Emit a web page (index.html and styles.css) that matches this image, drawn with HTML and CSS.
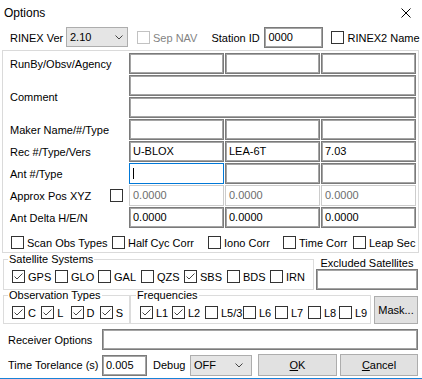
FILE: index.html
```html
<!DOCTYPE html>
<html lang="en">
<head>
  <meta charset="UTF-8">
  <meta name="viewport" content="width=device-width, initial-scale=1.0">
  <title>Options</title>
  <link rel="stylesheet" href="styles.css">
</head>
<body>
  <div class="dialog">
    <div class="titlebar">
      <span class="title">Options</span>
      <svg class="close" width="10" height="10" viewBox="0 0 10 10"><path d="M0.5 0.5 L9.5 9.5 M9.5 0.5 L0.5 9.5" stroke="#000" stroke-width="1"/></svg>
    </div>

    <div class="toprow">
      <span class="rinex-lbl">RINEX Ver</span>
      <div class="combo ver-combo">
        <span>2.10</span>
        <svg width="8" height="5" viewBox="0 0 8 5"><path d="M0.5 0.5 L4 4 L7.5 0.5" fill="none" stroke="#444"/></svg>
      </div>
      <span class="cb cb-disabled sepnav-cb"></span>
      <span class="disabled-text">Sep NAV</span>
      <span class="station-lbl">Station ID</span>
      <div class="field station-field">0000</div>
      <span class="cb rinex2-cb"></span>
      <span class="rinex2-lbl">RINEX2 Name</span>
    </div>

    <!-- Header fields -->
    <div class="panel">
      <div class="grid">
        <div class="rowlbl">RunBy/Obsv/Agency</div>
        <div class="field"></div>
        <div class="field"></div>
        <div class="field"></div>

        <div class="rowlbl two-rows">Comment</div>
        <div class="field wide"></div>
        <div class="field wide"></div>

        <div class="rowlbl">Maker Name/#/Type</div>
        <div class="field"></div>
        <div class="field"></div>
        <div class="field"></div>

        <div class="rowlbl">Rec #/Type/Vers</div>
        <div class="field">U-BLOX</div>
        <div class="field">LEA-6T</div>
        <div class="field">7.03</div>

        <div class="rowlbl">Ant #/Type</div>
        <div class="field focused"><span class="caret"></span></div>
        <div class="field"></div>
        <div class="field"></div>

        <div class="rowlbl approx-lbl">Approx Pos XYZ <span class="cb"></span></div>
        <div class="field field-disabled">0.0000</div>
        <div class="field field-disabled">0.0000</div>
        <div class="field field-disabled">0.0000</div>

        <div class="rowlbl">Ant Delta H/E/N</div>
        <div class="field">0.0000</div>
        <div class="field">0.0000</div>
        <div class="field">0.0000</div>
      </div>

      <div class="opts">
        <label class="opt opt-scan"><span class="cb"></span>Scan Obs Types</label>
        <label class="opt opt-half"><span class="cb"></span>Half Cyc Corr</label>
        <label class="opt opt-iono"><span class="cb"></span>Iono Corr</label>
        <label class="opt opt-time"><span class="cb"></span>Time Corr</label>
        <label class="opt"><span class="cb"></span>Leap Sec</label>
      </div>
    </div>

    <div class="sat-row">
      <fieldset class="group sat-group">
        <legend>Satellite Systems</legend>
        <div class="checks">
          <label class="opt sat"><span class="cb"><svg width="11" height="11" viewBox="0 0 11 11"><path d="M1.5 5.5 L4 8 L9.5 2.5" fill="none" stroke="#444"/></svg></span>GPS</label>
          <label class="opt sat"><span class="cb"></span>GLO</label>
          <label class="opt sat"><span class="cb"></span>GAL</label>
          <label class="opt sat"><span class="cb"></span>QZS</label>
          <label class="opt sat"><span class="cb"><svg width="11" height="11" viewBox="0 0 11 11"><path d="M1.5 5.5 L4 8 L9.5 2.5" fill="none" stroke="#444"/></svg></span>SBS</label>
          <label class="opt sat"><span class="cb"></span>BDS</label>
          <label class="opt sat"><span class="cb"></span>IRN</label>
        </div>
      </fieldset>
      <div class="excluded">
        <div class="excluded-lbl">Excluded Satellites</div>
        <div class="field excluded-field"></div>
      </div>
    </div>

    <div class="obs-row">
      <fieldset class="group obs-group">
        <legend>Observation Types</legend>
        <div class="checks">
          <label class="opt obs"><span class="cb"><svg width="11" height="11" viewBox="0 0 11 11"><path d="M1.5 5.5 L4 8 L9.5 2.5" fill="none" stroke="#444"/></svg></span>C</label>
          <label class="opt obs"><span class="cb"><svg width="11" height="11" viewBox="0 0 11 11"><path d="M1.5 5.5 L4 8 L9.5 2.5" fill="none" stroke="#444"/></svg></span>L</label>
          <label class="opt obs"><span class="cb"><svg width="11" height="11" viewBox="0 0 11 11"><path d="M1.5 5.5 L4 8 L9.5 2.5" fill="none" stroke="#444"/></svg></span>D</label>
          <label class="opt obs"><span class="cb"><svg width="11" height="11" viewBox="0 0 11 11"><path d="M1.5 5.5 L4 8 L9.5 2.5" fill="none" stroke="#444"/></svg></span>S</label>
        </div>
      </fieldset>
      <fieldset class="group freq-group">
        <legend>Frequencies</legend>
        <div class="checks">
          <label class="opt f-l1"><span class="cb"><svg width="11" height="11" viewBox="0 0 11 11"><path d="M1.5 5.5 L4 8 L9.5 2.5" fill="none" stroke="#444"/></svg></span>L1</label>
          <label class="opt f-l2"><span class="cb"><svg width="11" height="11" viewBox="0 0 11 11"><path d="M1.5 5.5 L4 8 L9.5 2.5" fill="none" stroke="#444"/></svg></span>L2</label>
          <label class="opt f-l5"><span class="cb"></span>L5/3</label>
          <label class="opt f-l6"><span class="cb"></span>L6</label>
          <label class="opt f-l7"><span class="cb"></span>L7</label>
          <label class="opt f-l8"><span class="cb"></span>L8</label>
          <label class="opt"><span class="cb"></span>L9</label>
        </div>
      </fieldset>
      <button class="btn mask-btn">Mask...</button>
    </div>

    <div class="form-row recv-row">
      <span class="form-lbl">Receiver Options</span>
      <div class="field recv-field"></div>
    </div>

    <div class="form-row time-row">
      <span class="form-lbl">Time Torelance (s)</span>
      <div class="field tol-field">0.005</div>
      <span class="debug-lbl">Debug</span>
      <div class="combo debug-combo">
        <span>OFF</span>
        <svg width="8" height="5" viewBox="0 0 8 5"><path d="M0.5 0.5 L4 4 L7.5 0.5" fill="none" stroke="#444"/></svg>
      </div>
      <button class="btn ok-btn"><u>O</u>K</button>
      <button class="btn cancel-btn"><u>C</u>ancel</button>
    </div>
  </div>
</body>
</html>
```

FILE: styles.css
```css
body {
  margin: 0;
  padding: 0;
  background: #fff;
  font-family: 'Liberation Sans', Arial, sans-serif;
  font-size: 11px;
  color: #000;
}

.dialog {
  width: 422px;
  height: 379px;
  box-sizing: border-box;
  border-bottom: 1px solid #1883d7;
  background: #fff;
  overflow: hidden;
}

.titlebar {
  height: 25px;
  display: flex;
  align-items: center;
  justify-content: space-between;
  padding: 0 11px 0 4px;
  font-size: 12px;
}

/* Top row */
.toprow {
  display: flex;
  align-items: center;
  height: 21px;
  margin-top: 2px;
}

.rinex-lbl {
  width: 56px;
  margin-left: 10px;
}

.combo {
  box-sizing: border-box;
  height: 20px;
  display: flex;
  align-items: center;
  justify-content: space-between;
  padding: 0 4px 0 3px;
  background: #e5e5e5;
  border: 1px solid #adadad;
}

.ver-combo {
  width: 62px;
  align-self: flex-start;
}

.sepnav-cb {
  margin-left: 9px;
}

.disabled-text {
  margin-left: 3px;
  color: #838383;
}

.station-lbl {
  margin-left: 14px;
  width: 53px;
}

.station-field {
  width: 59px;
  height: 20px;
  align-self: flex-end;
}

.rinex2-cb {
  margin-left: 8px;
}

.rinex2-lbl {
  margin-left: 3px;
}

/* Checkboxes */
.cb {
  box-sizing: border-box;
  width: 13px;
  height: 13px;
  flex: none;
  border: 1px solid #333;
  background: #fff;
  display: inline-flex;
}

.cb-disabled {
  border-color: #c2c2c2;
}

/* Text fields */
.field {
  box-sizing: border-box;
  height: 21px;
  border: 1px solid #7a7a7a;
  box-shadow: inset 0 0 0 1px #a5a5a5;
  background: #fff;
  padding-left: 3px;
  line-height: 19px;
  white-space: nowrap;
  overflow: hidden;
}

.field.focused {
  border-color: #0078d7;
  box-shadow: none;
  display: flex;
  align-items: center;
}

.caret {
  width: 1px;
  height: 11px;
  background: #000;
}

.field-disabled {
  border-color: #cccccc;
  box-shadow: none;
  color: #6d6d6d;
}

/* Header panel */
.panel {
  box-sizing: border-box;
  width: 417px;
  margin: 2px 0 0 2px;
  padding: 2px 2px 3px 7px;
  border: 1px solid #dadada;
}

.grid {
  display: grid;
  grid-template-columns: 118px 95px 95px 95px;
  grid-auto-rows: 21px;
  column-gap: 1px;
  row-gap: 1px;
}

.rowlbl {
  display: flex;
  align-items: center;
  white-space: nowrap;
}

.two-rows {
  grid-row: span 2;
}

.wide {
  grid-column: 2 / span 3;
}

.approx-lbl {
  justify-content: space-between;
  padding-right: 5px;
}

.opts {
  display: flex;
  margin-top: 8px;
  padding-left: 1px;
}

.opt {
  display: flex;
  align-items: center;
  gap: 3px;
  height: 13px;
  white-space: nowrap;
}

.opt-scan { width: 101px; }
.opt-half { width: 96px; }
.opt-iono { width: 75px; }
.opt-time { width: 70px; }

/* Group boxes */
.group {
  margin: 0;
  border: 1px solid #dcdcdc;
  min-width: 0;
}

.group legend {
  padding: 0 1px;
  margin-left: -4px;
  line-height: 12px;
}

.checks {
  display: flex;
}

.sat-row {
  display: flex;
}

.sat-group {
  box-sizing: border-box;
  width: 311px;
  margin-left: 3px;
  padding: 5px 0 4px 8px;
}

.sat {
  width: 43px;
}

.excluded {
  width: 102px;
  margin-left: 2px;
}

.excluded-lbl {
  margin-top: 4px;
  line-height: 12px;
  text-align: center;
}

.excluded-field {
  width: 102px;
}

.obs-row {
  display: flex;
  align-items: flex-start;
  margin-top: -1px;
}

.obs-group {
  box-sizing: border-box;
  width: 127px;
  margin-left: 3px;
  padding: 5px 0 4px 8px;
}

.obs {
  width: 30px;
}

.freq-group {
  box-sizing: border-box;
  width: 241px;
  padding: 5px 0 4px 9px;
}

.f-l1 { width: 32px; }
.f-l2 { width: 33px; }
.f-l5 { width: 38px; }
.f-l6 { width: 32px; }
.f-l7 { width: 33px; }
.f-l8 { width: 31px; }

/* Buttons */
.btn {
  box-sizing: border-box;
  margin: 0;
  padding: 0;
  background: #e1e1e1;
  border: 1px solid #adadad;
  font-family: 'Liberation Sans', Arial, sans-serif;
  font-size: 11px;
  color: #000;
}

.mask-btn {
  width: 44px;
  height: 28px;
  margin: 7px 0 0 3px;
}

/* Bottom rows */
.form-row {
  display: flex;
  align-items: center;
}

.recv-row {
  margin-top: 5px;
}

.time-row {
  margin-top: 4px;
}

.form-lbl {
  width: 94px;
  padding-left: 8px;
  white-space: nowrap;
}

.recv-field {
  width: 316px;
}

.tol-field {
  width: 45px;
}

.debug-lbl {
  width: 37px;
  margin-left: 6px;
}

.debug-combo {
  width: 62px;
  height: 21px;
  padding-right: 8px;
}

.ok-btn {
  width: 79px;
  height: 22px;
  margin-left: 6px;
}

.cancel-btn {
  width: 78px;
  height: 22px;
  margin-left: 3px;
}
```
